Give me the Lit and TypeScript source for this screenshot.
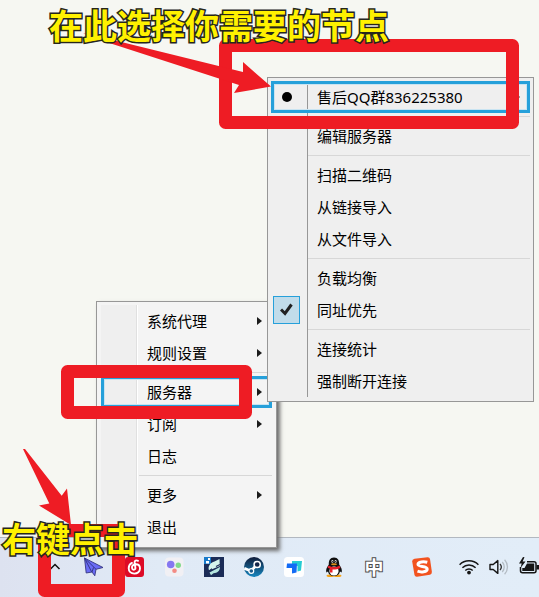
import { LitElement, html, css, svg, nothing } from "lit";
import { customElement, property } from "lit/decorators.js";

interface MenuEntry {
  label?: string;
  arrow?: boolean;
  active?: boolean;
  mark?: "radio" | "check";
}

const SEPARATOR: MenuEntry = {};

const MAIN_MENU: MenuEntry[] = [
  { label: "系统代理", arrow: true },
  { label: "规则设置", arrow: true },
  SEPARATOR,
  { label: "服务器", arrow: true, active: true },
  { label: "订阅", arrow: true },
  { label: "日志" },
  SEPARATOR,
  { label: "更多", arrow: true },
  { label: "退出" },
];

const SERVER_MENU: MenuEntry[] = [
  { label: "售后QQ群836225380", arrow: true, active: true, mark: "radio" },
  SEPARATOR,
  { label: "编辑服务器" },
  SEPARATOR,
  { label: "扫描二维码" },
  { label: "从链接导入" },
  { label: "从文件导入" },
  SEPARATOR,
  { label: "负载均衡" },
  { label: "同址优先", mark: "check" },
  SEPARATOR,
  { label: "连接统计" },
  { label: "强制断开连接" },
];

@customElement("context-menu")
export class ContextMenu extends LitElement {
  @property({ attribute: false }) entries: MenuEntry[] = [];
  @property({ reflect: true }) variant = "main";

  static styles = css`
    :host {
      display: block;
      box-sizing: border-box;
      border: 1px solid #979797;
      font: 15px/20px "Noto Sans", "Noto Sans CJK SC", sans-serif;
      color: #000;
    }
    :host([variant="main"]) {
      --text-start: 46px;
      --line-start: 38px;
      padding: 3px 4px 4px;
      background: #f4f4f4;
      box-shadow: 3px 3px 4px #6c6c6c;
    }
    :host([variant="server"]) {
      --text-start: 46px;
      --line-start: 37px;
      padding: 3px 3px 4px;
      background: #efefef;
    }
    .list {
      display: flex;
      flex-direction: column;
    }
    :host([variant="main"]) .list {
      background: linear-gradient(to right, #efefef 35px, #e0e0e0 35px, #e0e0e0 36px, #fff 36px, #fff 37px, transparent 37px);
    }
    :host([variant="server"]) .list {
      background: linear-gradient(to right, transparent 36px, #979797 36px, #979797 37px, transparent 37px);
    }
    .item {
      display: flex;
      align-items: center;
      box-sizing: border-box;
      height: 32px;
      margin: 0;
      padding: 0 9px 0 0;
      border: 0;
      background: none;
      font: inherit;
      color: inherit;
      text-align: left;
    }
    .active {
      box-shadow: inset 0 0 0 3px #26a0da, inset 0 0 0 4px #c9e4f2;
    }
    .mark {
      flex: none;
      display: flex;
      align-items: center;
      width: var(--text-start);
    }
    .label {
      flex: 1;
      white-space: nowrap;
    }
    .arrow {
      flex: none;
      width: 6px;
      height: 10px;
      fill: #1b1b1b;
    }
    .separator {
      width: auto;
      height: 1px;
      margin: 3px 0 3px var(--line-start);
      border: 0;
      background: #d7d7d7;
    }
    input {
      appearance: none;
      flex: none;
      margin: 0;
    }
    .radio {
      width: 10px;
      height: 10px;
      margin-left: 11px;
      border-radius: 50%;
      background: #000;
    }
    .check {
      box-sizing: border-box;
      width: 27px;
      height: 28px;
      margin-left: 2px;
      border: 1px solid #26a0da;
      background: #c1dcea;
    }
    .tick {
      flex: none;
      width: 14px;
      height: 14px;
      margin-left: -20px;
      fill: none;
      stroke: #212121;
      stroke-width: 3;
    }
  `;

  private arrow() {
    return html`<svg class="arrow" viewBox="0 0 6 10"><path d="M0 1 5 5 0 9z" /></svg>`;
  }

  private entry(e: MenuEntry) {
    if (!e.label) return html`<hr class="separator" />`;
    const cls = e.active ? "item active" : "item";
    const tail = e.arrow ? this.arrow() : nothing;
    if (e.mark === "radio") {
      return html`<label class=${cls}>
        <span class="mark"><input class="radio" type="radio" name="server" checked /></span>
        <span class="label">${e.label}</span>${tail}
      </label>`;
    }
    if (e.mark === "check") {
      return html`<label class=${cls}>
        <span class="mark"
          ><input class="check" type="checkbox" checked /><svg class="tick" viewBox="0 0 14 14">
            <path d="M1 6.500 5 10.500 11.500 1.500" /></svg
        ></span>
        <span class="label">${e.label}</span>${tail}
      </label>`;
    }
    return html`<button class=${cls} type="button">
      <span class="mark"></span><span class="label">${e.label}</span>${tail}
    </button>`;
  }

  render() {
    return html`<div class="list">${this.entries.map((e) => this.entry(e))}</div>`;
  }
}

const ICONS = {
  caret: svg`<path d="M6.500 12 11 7.500 15.500 12" fill="none" stroke="#111" stroke-width="1.500"/>`,
  plane: svg`<path d="M.5 1 19 10.500 12 12.300 10.800 18.800 8 15 2.200 16z" fill="#6a6cf6" stroke="#34357f" stroke-width=".9" stroke-linejoin="round"/>
    <path d="M.5 1 7.600 14.800M.5 1 12 12.300M8 15 9.500 10.500" fill="none" stroke="#30317c" stroke-width=".9"/>`,
  music: svg`<rect x="1" y="0" width="19" height="20" rx="3" fill="#dd0a26"/>
    <path d="M14 3.800C12.200 2.800 10.300 3.800 10.600 5.800L11.400 10.800C11.700 13.200 8.300 13.400 8 11 7.700 8.600 9.600 7.200 11.800 7.200 14.300 7.200 16 9 16 11.500 16 14.600 13.500 16.600 10.300 16.600 7 16.600 4.700 14.400 4.700 11.300 4.700 8.700 6 6.900 8 5.900" fill="none" stroke="#fff" stroke-width="1.900" stroke-linecap="round"/>`,
  dots: svg`<rect x="1" y=".5" width="18.500" height="19" rx="4" fill="#f1f0f4"/>
    <circle cx="6.700" cy="7.500" r="3.800" fill="#8577f0"/><circle cx="14.300" cy="8.300" r="2.700" fill="#84d98c"/>
    <circle cx="10.500" cy="13.700" r="2.300" fill="#f38b84"/>`,
  leaf: svg`<rect width="20" height="20" fill="#1b2c57"/>
    <path d="M0 0H7V7H0z" fill="#1879c9"/><path d="M2 4h3v2.500H2zM4 1h2v2H4z" fill="#fff"/>
    <path d="M15.500 2 15.800 9 5 13.500C3.500 9 6.500 5.500 10.500 4.500z" fill="#d5f4ec"/>
    <path d="M16 10C16 14 13 16.300 9.500 16.200L7 18.300 5.500 15.400z" fill="#b5e6df"/>
    <path d="M4.500 14.500 8 11.700M12 9.500 16 7.500" stroke="#1b2c57" stroke-width="1.200"/>`,
  steam: svg`<defs><linearGradient id="st" x2="0" y2="1"><stop stop-color="#101b38"/><stop offset="1" stop-color="#1687c0"/></linearGradient></defs>
    <circle cx="10" cy="10" r="10" fill="url(#st)"/>
    <path d="M.3 11.300 6.200 13.700 9.800 11 13 7.600" fill="none" stroke="#fff" stroke-width="2.800"/>
    <circle cx="7.300" cy="14" r="2.400" fill="#1b5b8b" stroke="#fff" stroke-width="1.200"/>
    <circle cx="13.200" cy="7.500" r="3.100" fill="#122447" stroke="#fff" stroke-width="1.500"/>`,
  desk: svg`<rect width="20" height="20" rx="3.500" fill="#fff"/>
    <path d="M8 4H18L17 13.500 13.500 14.500V9H8z" fill="#25ccd3"/>
    <path d="M3 6.500H13L12.500 15.500 8 16.500V11H2.500z" fill="#126bf5"/>`,
  penguin: svg`<ellipse cx="6.500" cy="18.700" rx="4" ry="1.300" fill="#f6a316"/><ellipse cx="13.500" cy="18.700" rx="4" ry="1.300" fill="#f6a316"/>
    <path d="M10 .5C6 .5 4.700 3.500 4.800 7.500 3 10 1.600 12.500 2.300 15.500L4 14.500C4.500 17.500 7 19 10 19S15.500 17.500 16 14.500L17.700 15.500C18.400 12.500 17 10 15.200 7.500 15.300 3.500 14 .5 10 .5z" fill="#101010"/>
    <ellipse cx="10" cy="14" rx="4.600" ry="4.600" fill="#fff"/>
    <path d="M4.500 8.500C8 10.500 12 10.500 15.500 8.500L16.500 11C13 12.500 10 12.700 8.500 12.400V15.500H6V11.700L3.600 10.800z" fill="#e8202a"/>
    <ellipse cx="8.400" cy="4.500" rx="1" ry="1.400" fill="#ddd"/><ellipse cx="11.600" cy="4.500" rx="1" ry="1.400" fill="#ddd"/>
    <circle cx="8.700" cy="4.700" r=".6"/><circle cx="11.300" cy="4.700" r=".6"/>
    <ellipse cx="10" cy="7.300" rx="3" ry="1" fill="#d88f1b"/>`,
  sogou: svg`<path d="M2.500 1.800 15.500 .2Q17.500 0 18 2L19.900 15Q20 17.200 18 17.700L5 19.800Q3 20 2.500 18L.2 4.500Q0 2.300 2.500 1.800z" fill="#f2531f"/>
    <path d="M15.300 5.300C12 4.400 5.800 4.600 6 7.500 6.200 10.200 15 8.700 15.200 12 15.300 15 9 15.500 5.500 14.200" fill="none" stroke="#fff" stroke-width="3"/>`,
  wifi: svg`<g fill="none" stroke="#151515" stroke-width="1.500"><path d="M.6 7.700A13.300 13.300 0 0 1 19.400 7.700"/><path d="M3.400 10.700A9.300 9.300 0 0 1 16.600 10.700"/><path d="M6.300 13.500A5.300 5.300 0 0 1 13.700 13.500"/></g>
    <circle cx="10" cy="15.600" r="1.900" fill="#151515"/>`,
  volume: svg`<path d="M1 7.500H4.200L8.800 3.600V16.400L4.200 12.500H1z" fill="none" stroke="#151515" stroke-width="1.400" stroke-linejoin="round"/>
    <path d="M11 7A4.500 4.500 0 0 1 11 13" fill="none" stroke="#333" stroke-width="1.300"/>
    <g fill="none" stroke="#b3bbc3" stroke-width="1.300"><path d="M13.300 5A7.500 7.500 0 0 1 13.300 15"/><path d="M15.600 2.800A10.500 10.500 0 0 1 15.600 17.200"/></g>`,
  battery: svg`<path d="M8 4.700H15Q17 4.700 17 6.700V13.700Q17 15.700 15 15.700H3.500Q1.500 15.700 1.500 13.700V10" fill="none" stroke="#151515" stroke-width="1.500"/>
    <path d="M8 6.500H15.200V14H3.300V11H5.500z" fill="#151515"/><path d="M17.500 8H20V12.500H17.500z" fill="#151515"/>
    <path d="M4 0 0 6.500H2.700L1.500 11 6.500 4.500H3.600L5.500 .3z" fill="#151515"/>`,
};

@customElement("app-root")
export class AppRoot extends LitElement {
  static styles = css`
    :host {
      position: relative;
      display: flex;
      flex-direction: column;
      min-height: 100vh;
      overflow: hidden;
      font-family: "Noto Sans", "Noto Sans CJK SC", sans-serif;
    }
    .desktop {
      flex: 1;
      background: #f6f7f2;
    }
    .taskbar {
      display: flex;
      align-items: center;
      box-sizing: border-box;
      height: 60px;
      padding: 0 0 1px 34px;
      border-top: 1px solid #b2b8c0;
      background: linear-gradient(to right, #dde2f0, #e0eaf6 160px, #e2edf8);
    }
    .tray {
      display: flex;
      align-items: center;
      justify-content: center;
      flex: none;
      width: 40px;
      height: 40px;
      margin: 0;
      padding: 0;
      border: 0;
      background: none;
      font: 700 19px/20px "Noto Sans CJK SC", sans-serif;
      color: #fff;
    }
    .tray svg {
      width: 20px;
      height: 20px;
    }
    .ime {
      -webkit-text-stroke: 2px #4a4a4a;
      paint-order: stroke fill;
    }
    .status {
      display: flex;
      margin-left: 12px;
    }
    .sogou {
      margin-left: 8px;
    }
    .status .tray {
      width: 30px;
    }
    .status .last {
      width: 25px;
      justify-content: flex-end;
    }
    .main-menu,
    .server-menu,
    .marks,
    .note {
      position: absolute;
    }
    .main-menu {
      left: 96px;
      top: 301px;
      width: 181px;
    }
    .server-menu {
      left: 267px;
      top: 77px;
      width: 267px;
    }
    .marks {
      left: 0;
      top: 0;
      width: 539px;
      height: 597px;
      pointer-events: none;
    }
    .note {
      margin: 0;
      font: 700 34px/34px "Noto Sans CJK SC", sans-serif;
      color: #fff100;
      white-space: nowrap;
      -webkit-text-stroke: 3px #26261c;
      paint-order: stroke fill;
      pointer-events: none;
    }
    .pick {
      left: 49px;
      top: 8px;
    }
    .click {
      left: 2px;
      top: 521px;
    }
  `;

  private tray(name: string, icon: unknown, extra = "") {
    return html`<button class="tray ${extra}" type="button" aria-label=${name}>
      <svg viewBox="0 0 20 20">${icon}</svg>
    </button>`;
  }

  render() {
    return html`
      <main class="desktop"></main>
      <footer class="taskbar">
        ${this.tray("显示隐藏的图标", ICONS.caret)} ${this.tray("代理", ICONS.plane)}
        ${this.tray("音乐", ICONS.music)} ${this.tray("控制中心", ICONS.dots)}
        ${this.tray("加速器", ICONS.leaf)} ${this.tray("Steam", ICONS.steam)}
        ${this.tray("远程桌面", ICONS.desk)} ${this.tray("QQ", ICONS.penguin)}
        <button class="tray ime" type="button">中</button>
        ${this.tray("输入法", ICONS.sogou, "sogou")}
        <div class="status">
          ${this.tray("网络", ICONS.wifi)} ${this.tray("音量", ICONS.volume)}
          ${this.tray("电池", ICONS.battery, "last")}
        </div>
      </footer>
      <context-menu class="main-menu" variant="main" .entries=${MAIN_MENU}></context-menu>
      <context-menu class="server-menu" variant="server" .entries=${SERVER_MENU}></context-menu>
      <svg class="marks" viewBox="0 0 539 597" aria-hidden="true">
        <g fill="none" stroke="#ee1c24" stroke-width="13" stroke-linejoin="round">
          <rect x="225.500" y="45.500" width="287" height="77" />
          <rect x="67.500" y="371.500" width="178" height="41" />
          <rect x="44.500" y="530.500" width="74" height="60" />
        </g>
        <g fill="#ee1c24">
          <path d="M83 33 97 36 243 72 243 62 271 86.500 234 93 239 85 97 39z" />
          <path d="M23 449H25L61.700 495.700 67 488.500 71 525 39 505.500 49.300 503.500z" />
        </g>
      </svg>
      <p class="note pick">在此选择你需要的节点</p>
      <p class="note click">右键点击</p>
    `;
  }
}
